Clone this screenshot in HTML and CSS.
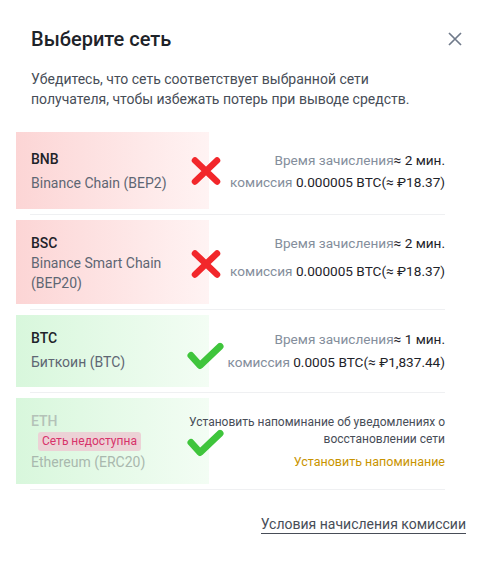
FILE: index.html
```html
<!DOCTYPE html>
<html lang="ru">
<head>
<meta charset="utf-8">
<title>Выберите сеть</title>
<link rel="stylesheet" href="styles.css">
</head>
<body>
<div class="modal">
  <div class="header">
    <h1 class="title">Выберите сеть</h1>
    <button class="close" aria-label="Закрыть">
      <svg width="14" height="14" viewBox="0 0 14 14"><path d="M1 1L13 13M13 1L1 13" stroke="#707a8a" stroke-width="1.7" fill="none"/></svg>
    </button>
  </div>
  <p class="desc">Убедитесь, что сеть соответствует выбранной сети получателя, чтобы избежать потерь при выводе средств.</p>

  <div class="list">
    <div class="row row--bad">
      <div class="net">
        <div class="net-code">BNB</div>
        <div class="net-name">Binance Chain (BEP2)</div>
      </div>
      <div class="meta">
        <div class="meta-line"><span class="muted">Время зачисления</span>≈ 2 мин.</div>
        <div class="meta-line"><span class="muted">комиссия</span> 0.000005 BTC(≈ ₽18.37)</div>
      </div>
      <svg class="mark mark--x" width="30" height="29" viewBox="0 0 30 29"><path d="M4 4L26 25M26 4L4 25" stroke="#f2272b" stroke-width="6.5" stroke-linecap="round" fill="none"/></svg>
    </div>
    <div class="divider"></div>

    <div class="row row--bad row--tall">
      <div class="net">
        <div class="net-code">BSC</div>
        <div class="net-name net-name--tight">Binance Smart Chain (BEP20)</div>
      </div>
      <div class="meta meta--wide">
        <div class="meta-line"><span class="muted">Время зачисления</span>≈ 2 мин.</div>
        <div class="meta-line"><span class="muted">комиссия</span> 0.000005 BTC(≈ ₽18.37)</div>
      </div>
      <svg class="mark mark--x mark--low" width="30" height="29" viewBox="0 0 30 29"><path d="M4 4L26 25M26 4L4 25" stroke="#f2272b" stroke-width="6.5" stroke-linecap="round" fill="none"/></svg>
    </div>
    <div class="divider"></div>

    <div class="row row--good row--short">
      <div class="net">
        <div class="net-code">BTC</div>
        <div class="net-name">Биткоин (BTC)</div>
      </div>
      <div class="meta meta--mid">
        <div class="meta-line"><span class="muted">Время зачисления</span>≈ 1 мин.</div>
        <div class="meta-line"><span class="muted">комиссия</span> 0.0005 BTC(≈ ₽1,837.44)</div>
      </div>
      <svg class="mark mark--check mark--lower" width="37" height="27" viewBox="0 0 37 27"><path d="M4 13L13 23L33 4" stroke="#3fc53c" stroke-width="7" stroke-linecap="round" stroke-linejoin="round" fill="none"/></svg>
    </div>
    <div class="divider"></div>

    <div class="row row--good row--off">
      <div class="net">
        <div class="net-code net-code--off">ETH</div>
        <div class="badge">Сеть недоступна</div>
        <div class="net-name net-name--off">Ethereum (ERC20)</div>
      </div>
      <div class="meta meta--notice">
        <div class="notice">Установить напоминание об уведомлениях о восстановлении сети</div>
        <a class="remind" href="#">Установить напоминание</a>
      </div>
      <svg class="mark mark--check mark--low" width="37" height="27" viewBox="0 0 37 27"><path d="M4 13L13 23L33 4" stroke="#3fc53c" stroke-width="7" stroke-linecap="round" stroke-linejoin="round" fill="none"/></svg>
    </div>
    <div class="divider"></div>
  </div>

  <div class="footer">
    <a class="terms" href="#">Условия начисления комиссии</a>
  </div>
</div>
</body>
</html>
```

FILE: styles.css
```css
* { box-sizing: border-box; }

html, body {
  margin: 0;
  padding: 0;
  background: #ffffff;
}

body {
  font-family: Roboto, "Noto Sans", "Liberation Sans", sans-serif;
  color: #1e2329;
  width: 496px;
  height: 561px;
  overflow: hidden;
}

.modal {
  padding: 25px 30px 0 30px;
}

.header {
  display: flex;
  align-items: center;
  justify-content: space-between;
  height: 28px;
}

.title {
  margin: 0;
  font-size: 20px;
  line-height: 28px;
  font-weight: 500;
  color: #1e2329;
  padding-left: 1px;
}

.close {
  border: 0;
  background: none;
  padding: 0;
  width: 14px;
  height: 14px;
  margin-right: 4px;
  display: flex;
}

.desc {
  margin: 16px 0 0 0;
  font-size: 14px;
  line-height: 20px;
  color: #474d57;
  max-width: 420px;
  padding-left: 1px;
}

.list {
  margin: 23px 21px 0 0;
}

.row {
  position: relative;
  display: flex;
  justify-content: space-between;
  align-items: flex-start;
  margin-left: -14px;
  padding: 17px 0 16px 15px;
}

.row--bad {
  background: linear-gradient(90deg, #fcd5d5 0, #fff3f3 193px, transparent 193px);
}

.row--good {
  background: linear-gradient(90deg, #d8f7dc 0, #f3fdf4 193px, transparent 193px);
}

.row--tall { padding: 13px 0 11px 15px; }
.row--short { padding: 13px 0 13px 15px; }
.row--off { padding: 13px 0 12px 15px; }

.net {
  display: flex;
  flex-direction: column;
}

.net-code {
  font-size: 14px;
  line-height: 20px;
  font-weight: 500;
  color: #1e2329;
}

.net-name {
  font-size: 14px;
  line-height: 20px;
  margin-top: 4px;
  color: #5e6673;
  width: 140px;
}

.net-name--tight { margin-top: 0; }

.net-code--off { color: #b4c2b8; }

.net-name--off {
  color: #a9b8ae;
  margin-top: 1px;
}

.badge {
  align-self: flex-start;
  margin: 1px 0 0 7px;
  padding: 0 4px;
  height: 19px;
  line-height: 19px;
  font-size: 12px;
  color: #d7336a;
  background: #ecd2d6;
  border-radius: 3px;
}

.meta {
  display: flex;
  flex-direction: column;
  align-items: flex-end;
  text-align: right;
  font-size: 13.6px;
  line-height: 22px;
  color: #1e2329;
}

.meta--wide { line-height: 20px; gap: 8px; }
.meta--mid { line-height: 23px; }

.muted { color: #848e9c; }

.meta--notice {
  margin-top: 3px;
  width: 262px;
}

.notice {
  font-size: 12px;
  line-height: 17px;
  color: #474d57;
}

.remind {
  margin-top: 4px;
  font-size: 12.5px;
  line-height: 20px;
  color: #c99400;
  text-decoration: none;
}

.mark {
  position: absolute;
  top: 50%;
  transform: translateY(-50%);
}

.mark--x { left: 175px; }
.mark--check { left: 171px; }
.mark--low { top: calc(50% + 2px); }
.mark--lower { top: calc(50% + 5px); }

.divider {
  height: 1px;
  margin: 5px 0;
  background: #eff0f2;
}

.footer {
  margin-top: 24px;
  text-align: right;
}

.terms {
  display: inline-block;
  font-size: 14px;
  line-height: 18px;
  color: #474d57;
  text-decoration: none;
  border-bottom: 1px solid #474d57;
}
```
